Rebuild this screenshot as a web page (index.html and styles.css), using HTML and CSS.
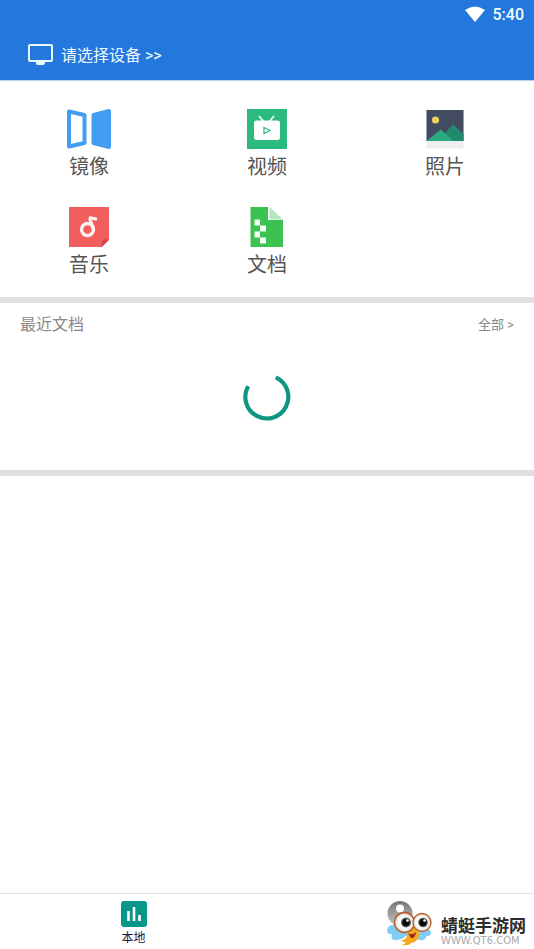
FILE: index.html
```html
<!DOCTYPE html>
<html lang="zh-CN">
<head>
  <meta charset="UTF-8" />
  <meta name="viewport" content="width=device-width, initial-scale=1.0" />
  <title>本地</title>
  <link rel="stylesheet" href="styles.css">
</head>
<body>
  <header class="header">
    <div class="status-bar">
      <svg class="wifi" viewBox="0 0 20 16" aria-hidden="true">
        <path d="M10 16 0 4Q10-3 20 4Z" fill="#fff" />
      </svg>
      <span class="clock">5:40</span>
    </div>
    <button class="device-btn" type="button">
      <svg class="monitor" viewBox="0 0 26 22" aria-hidden="true">
        <rect x="2" y="2" width="23" height="16" rx="1" fill="none" stroke="#e8fbff" stroke-width="2" />
        <path d="M9 18h9v2q0 2-2 2h-5q-2 0-2-2Z" fill="#e8fbff" />
      </svg>
      <span>请选择设备 &gt;&gt;</span>
    </button>
  </header>

  <main>
    <nav class="menu">
      <a class="menu-item" href="#mirror">
        <svg class="icon" viewBox="0 0 44 40" aria-hidden="true">
          <path d="M2 2.500 17.500 6v28L2 37.500Z" fill="none" stroke="#429ef0" stroke-width="4" stroke-linejoin="round" />
          <path d="M26.500 6 42 2v36l-15.500-4Z" fill="#429ef0" stroke="#429ef0" stroke-width="4" stroke-linejoin="round" />
        </svg>
        <span>镜像</span>
      </a>
      <a class="menu-item" href="#video">
        <svg class="icon" viewBox="0 0 44 40" aria-hidden="true">
          <rect x="2" width="40" height="40" fill="#2dba80" />
          <path d="m14 7 5 6M29 7l-5 6" stroke="#eafff4" stroke-width="1.800" />
          <rect x="9" y="11.500" width="26" height="19.500" rx="2.500" fill="#fff" />
          <path d="M19 18.500v6l6-3Z" fill="#fff" stroke="#2dba80" stroke-width="1.300" />
        </svg>
        <span>视频</span>
      </a>
      <a class="menu-item" href="#photo">
        <svg class="icon" viewBox="0 0 44 40" aria-hidden="true">
          <rect x="3.500" y="1" width="37" height="38.500" fill="#ebefee" />
          <rect x="3.500" y="1" width="37" height="31" fill="#434b60" />
          <path d="M14 32 30 15.500l10.500 9.500v7Z" fill="#23896c" />
          <path d="M3.500 32 18 20.500 30.500 32Z" fill="#29aa80" />
          <circle cx="12.500" cy="11" r="3.600" fill="#ead45b" />
        </svg>
        <span>照片</span>
      </a>
      <a class="menu-item" href="#music">
        <svg class="icon" viewBox="0 0 44 40" aria-hidden="true">
          <path d="M2 0h40v33l-7 7H2Z" fill="#f05e5d" />
          <path d="M42 32.500 34.500 40v-5l2.500-2.500Z" fill="#d2434a" />
          <circle cx="20.500" cy="22.500" r="6" fill="none" stroke="#fff2f0" stroke-width="3.400" />
          <path d="M26.500 22 22.500 11M22 10.500l8 1.700" fill="none" stroke="#fff2f0" stroke-width="3.200" />
        </svg>
        <span>音乐</span>
      </a>
      <a class="menu-item" href="#docs">
        <svg class="icon" viewBox="0 0 44 40" aria-hidden="true">
          <path d="M5.500 0H23v13h15v27H5.500Z" fill="#3cc251" />
          <path d="M24.500 0 38 12.500H24.500Z" fill="#b4e7bb" />
          <path d="M9.500 12.500h5.500v6H9.500ZM15 18.500h6v6h-6ZM9.500 24.500H15v6H9.500ZM15 30.500h6v6h-6Z" fill="#f5fff5" />
        </svg>
        <span>文档</span>
      </a>
    </nav>

    <section class="recent">
      <div class="recent-head">
        <h2>最近文档</h2>
        <a href="#all">全部 &gt;</a>
      </div>
      <div class="loading" role="status" aria-label="加载中">
        <svg class="spinner" viewBox="0 0 48 48" aria-hidden="true">
          <path d="M5.200 13.200A21.500 21.500 0 1 0 32.800 4.400" fill="none" stroke="#0f9683" stroke-width="4.200" />
        </svg>
      </div>
    </section>
  </main>

  <footer class="tab-bar">
    <a class="tab" href="#local">
      <svg class="tab-icon" viewBox="0 0 26 26" aria-hidden="true">
        <rect width="26" height="26" rx="3" fill="#079687" />
        <path d="M7.500 10v10M13 6v14M18.500 14v6" stroke="#fff" stroke-width="2.600" />
      </svg>
      <span>本地</span>
    </a>
  </footer>

  <div class="watermark">
    <svg class="mascot" viewBox="0 0 46 46" aria-hidden="true">
      <defs>
        <linearGradient id="tail" x1="0" y1="0" x2="0" y2="1">
          <stop offset="0" stop-color="#777" />
          <stop offset="1" stop-color="#c4c4c4" />
        </linearGradient>
        <radialGradient id="eye">
          <stop offset="0.600" stop-color="#fff" />
          <stop offset="1" stop-color="#d7d3cb" />
        </radialGradient>
      </defs>
      <circle cx="13" cy="13.500" r="12.500" fill="url(#tail)" />
      <circle cx="13" cy="8.500" r="4" fill="#fff" />
      <path d="M11 24Q0 24 0 31q1 4 5 3-2 7 5 6 8-1 12-8ZM32 28q12-1 12 5-1 4-5 3 0 5-6 4-6-1-7-8Z" fill="#7fcdf4" />
      <path d="M24 20q9 8 8 15-1 7-8 8-2 3-9 2 3-1 4-3-4 0-5-2 6 0 6-6Z" fill="#f5a91d" />
      <path d="M21 33q4 3 8-1-1 7-5 6Z" fill="#9c291b" />
      <circle cx="17.500" cy="22.500" r="10" fill="url(#eye)" stroke="#b95924" stroke-width="1.300" />
      <circle cx="35" cy="22.500" r="9" fill="url(#eye)" stroke="#b95924" stroke-width="1.300" />
      <circle cx="19" cy="22.500" r="5" fill="#555" />
      <circle cx="36" cy="22.500" r="4.800" fill="#555" />
      <circle cx="19" cy="22.500" r="3.600" fill="#080808" />
      <circle cx="36" cy="22.500" r="3.500" fill="#080808" />
      <circle cx="20.500" cy="20.500" r="1.300" fill="#fff" />
      <circle cx="37.500" cy="20.500" r="1.300" fill="#fff" />
    </svg>
    <div class="brand">
      <strong>蜻蜓手游网</strong>
      <span>WWW.QT6.COM</span>
    </div>
  </div>
</body>
</html>
```
FILE: styles.css
```css
* {
  margin: 0;
  padding: 0;
  box-sizing: border-box;
}

body {
  display: flex;
  flex-direction: column;
  min-height: 100vh;
  position: relative;
  font-family: Roboto, "Noto Sans CJK SC", sans-serif;
  background: #fff;
  color: #555;
}

a {
  color: inherit;
  text-decoration: none;
}

svg {
  display: block;
  flex-shrink: 0;
}

/* 顶部 */
.header {
  background: #2478dd;
  color: #f0fcff;
  border-bottom: 1px solid #b5d1f2;
}

.status-bar {
  display: flex;
  align-items: center;
  justify-content: flex-end;
  gap: 8px;
  height: 28px;
  padding: 0 10px;
}

.wifi {
  width: 20px;
  height: 16px;
}

.clock {
  font-size: 16px;
  font-weight: 500;
}

.device-btn {
  display: flex;
  align-items: center;
  gap: 8px;
  height: 52px;
  padding: 0 27px;
  border: none;
  background: none;
  color: inherit;
  font: inherit;
  font-size: 16px;
  cursor: pointer;
}

.monitor {
  width: 26px;
  height: 22px;
}

/* 功能入口 */
.menu {
  display: grid;
  grid-template-columns: repeat(3, 1fr);
  gap: 20px 0;
  padding: 28px 0 12px;
  border-bottom: 6px solid #e0e0e0;
}

.menu-item {
  display: flex;
  flex-direction: column;
  align-items: center;
  gap: 3px;
  font-size: 20px;
  line-height: 30px;
  height: 78px;
}

.icon {
  width: 44px;
  height: 40px;
}

/* 最近文档 */
.recent {
  border-bottom: 6px solid #e0e0e0;
}

.recent-head {
  display: flex;
  align-items: center;
  justify-content: space-between;
  height: 40px;
  padding: 0 20px;
  color: #888;
}

.recent-head h2 {
  font-size: 16px;
  font-weight: 400;
}

.recent-head a {
  font-size: 13px;
}

.loading {
  display: flex;
  justify-content: center;
  padding: 30px 0 49px;
}

.spinner {
  width: 48px;
  height: 48px;
}

/* 底部导航 */
.tab-bar {
  display: flex;
  margin-top: auto;
  border-top: 1px solid #e2e2e2;
}

.tab {
  display: flex;
  flex-direction: column;
  align-items: center;
  gap: 1px;
  width: 50%;
  height: 55px;
  padding-top: 7px;
  font-size: 12px;
  line-height: 20px;
  color: #1d1548;
}

.tab-icon {
  width: 26px;
  height: 26px;
}

.watermark {
  position: absolute;
  right: 8px;
  bottom: 3px;
  display: flex;
  align-items: center;
  gap: 8px;
}

.mascot {
  width: 46px;
  height: 46px;
}

.brand {
  display: flex;
  flex-direction: column;
  padding-top: 16px;
}

.brand strong {
  font-size: 17px;
  line-height: 20px;
  color: #2d2d2d;
}

.brand span {
  font-family: "DejaVu Sans", sans-serif;
  font-size: 10px;
  line-height: 10px;
  color: #aaa;
}
```
